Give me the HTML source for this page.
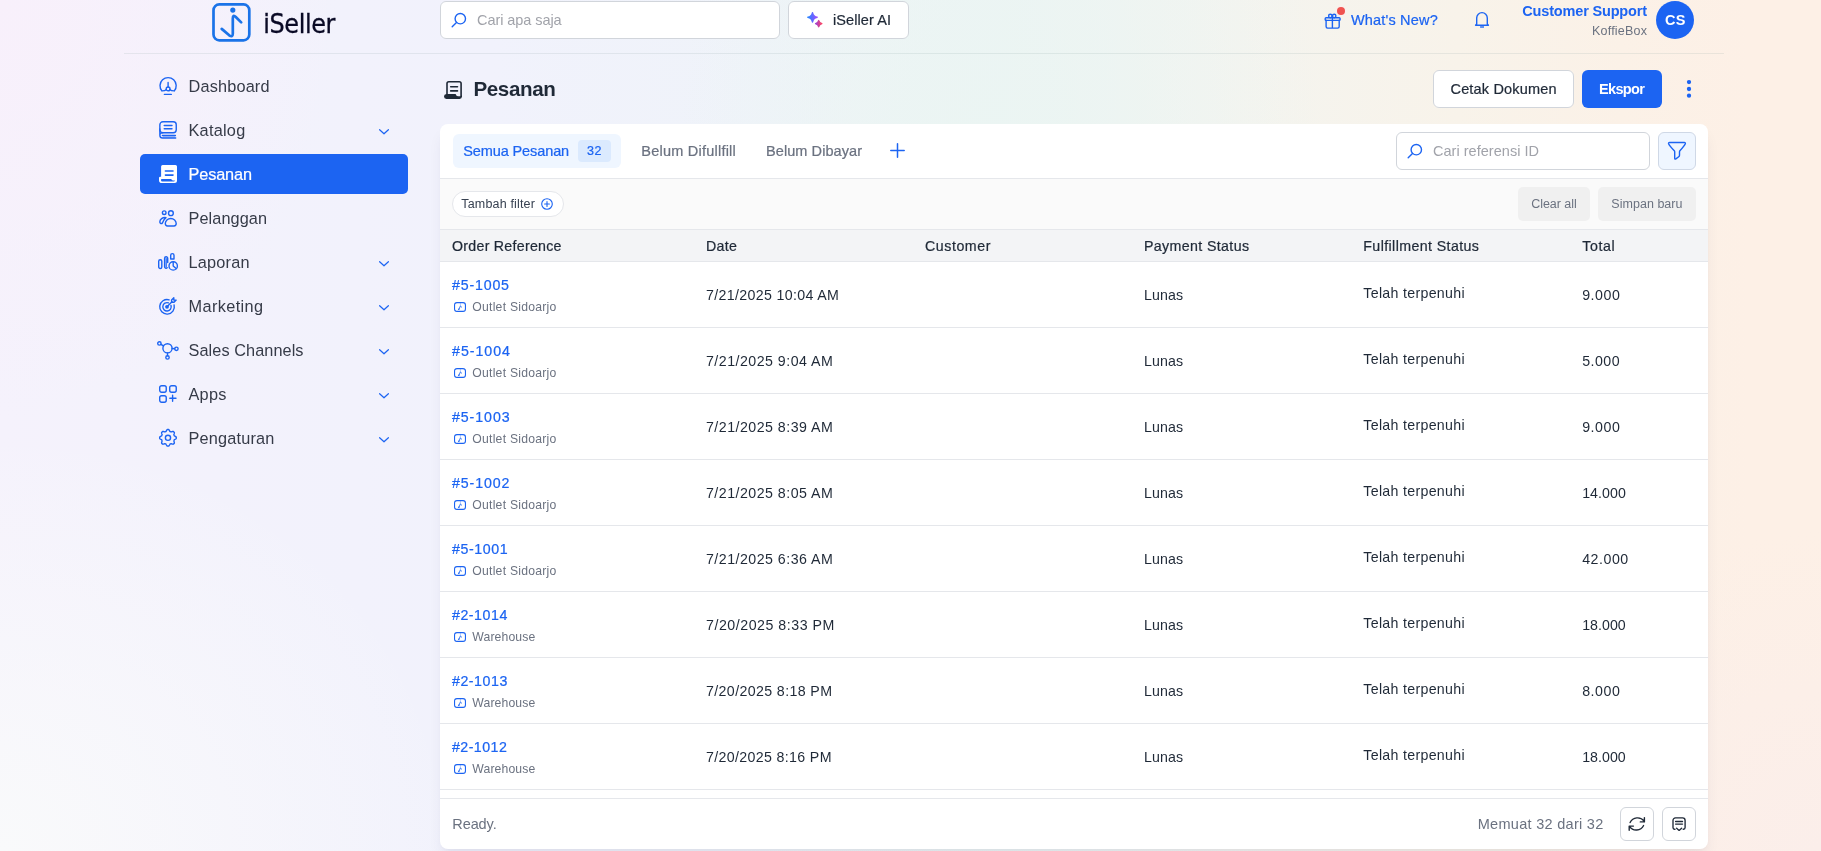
<!DOCTYPE html><html lang="id"><head><meta charset="utf-8"><title>Pesanan - iSeller</title><style>
*{box-sizing:border-box;margin:0;padding:0}
html,body{width:1821px;height:851px;overflow:hidden}
body{font-family:"Liberation Sans",sans-serif;position:relative;background:#f3f1fc;
 background-image:
  radial-gradient(ellipse 340px 420px at 0px 0px,#f8f0fb 0%,rgba(248,240,251,0) 100%),
  radial-gradient(ellipse 460px 420px at 0px 100%,#f9fafb 0%,rgba(249,250,251,0) 100%),
  radial-gradient(ellipse 320px 320px at 100% 100%,#fbeeea 0%,rgba(251,238,234,0) 100%),
  radial-gradient(ellipse 330px 900px at 1000px 40%,#eaf5f2 0%,rgba(234,245,242,0) 100%),
  linear-gradient(90deg,#f5f2fc 0%,#f3f2fc 12%,#f1f2fc 27%,#eff3f9 42%,#eef4f5 55%,#f4f4ef 68%,#f8f3ea 80%,#fbf1e7 89%,#fdf0e6 96%,#fdf0e6 100%);
}
.t{position:absolute;white-space:pre;line-height:20px;display:block}
.abs{position:absolute}
svg{position:absolute;overflow:visible}
.box{position:absolute;background:#fff;border:1px solid #d1d5db;border-radius:6px}
header,nav,main{position:absolute;left:0;top:0;will-change:transform}
.hr{position:absolute;height:1px;background:#e5e7eb}
</style></head><body>
<header>
<div class="abs" style="left:124px;top:53px;width:1600px;height:1px;background:rgba(120,150,150,.14)"></div>
<svg style="left:211px;top:2px" width="40" height="40" viewBox="0 0 40 40" fill="none" stroke="#1a73e8" stroke-width="2.7" stroke-linecap="round" stroke-linejoin="round"><rect x="2.5" y="2.4" width="35.8" height="35.9" rx="5.8"/><path stroke-width="2.7" d="M10.7 26.9 L18.2 33.3 Q21.8 35.8 21.8 31.5 V16.5 Q21.8 12 24.8 15 L30.2 20.4"/><circle cx="21.8" cy="8.1" r="2.6" fill="#1a73e8" stroke="none"/></svg>
<span class="t" style="left:263.3px;top:13.70px;font-family:'DejaVu Sans','Liberation Sans',sans-serif;font-stretch:condensed;font-size:26.6px;letter-spacing:-0.4px;color:#0a0a25;-webkit-text-stroke:0.3px #0a0a25">iSeller</span>
<div class="box" style="left:440px;top:1px;width:340px;height:38px"></div>
<svg style="left:451px;top:12px" width="16" height="16" viewBox="0 0 16 16" fill="none" stroke="#1c64f2" stroke-width="1.4" stroke-linecap="round"><circle cx="9.3" cy="6.7" r="5.2"/><path d="M5.5 10.5 L1.2 14.8"/></svg>
<span class="t " style="top:9.98px;font-size:14.5px;color:#a1a3aa;left:477.00px;letter-spacing:-0.070px;">Cari apa saja</span>
<div class="box" style="left:788px;top:1px;width:121px;height:38px"></div>
<svg style="left:806px;top:11px" width="18" height="18" viewBox="0 0 18 18"><defs><linearGradient id="ga" x1="0" y1="0" x2="1" y2="0"><stop offset="0" stop-color="#2684ff"/><stop offset="1" stop-color="#9a4dff"/></linearGradient><linearGradient id="gb" x1="0" y1="0" x2="1" y2="0"><stop offset="0" stop-color="#9a3fd6"/><stop offset="1" stop-color="#ff4560"/></linearGradient></defs><path fill="url(#ga)" stroke="url(#ga)" stroke-width="1.5" stroke-linejoin="round" d="M6.5 1.8 Q7.3 5.5 11.1 6.35 Q7.3 7.2 6.5 10.9 Q5.7 7.2 1.9 6.35 Q5.7 5.5 6.5 1.8Z"/><path fill="url(#gb)" stroke="url(#gb)" stroke-width="1.25" stroke-linejoin="round" d="M12.7 9.5 Q13.3 12.1 15.9 12.7 Q13.3 13.3 12.7 15.9 Q12.1 13.3 9.5 12.7 Q12.1 12.1 12.7 9.5Z"/></svg>
<span class="t " style="top:9.98px;font-size:14.5px;color:#1f2937;left:833.00px;-webkit-text-stroke:0.22px currentColor;letter-spacing:0.085px;">iSeller AI</span>
<svg style="left:1324px;top:12px" width="18" height="18" viewBox="0 0 18 18" fill="none" stroke="#1c64f2" stroke-width="1.4" stroke-linecap="round" stroke-linejoin="round"><rect x="1.2" y="5.8" width="14.9" height="2.6" rx=".9"/><path d="M2.1 8.3 V14.6 a1.5 1.5 0 0 0 1.5 1.5 H13.7 a1.5 1.5 0 0 0 1.5 -1.5 V8.3 M8.4 5.5 V16"/><circle cx="6.3" cy="4" r="1.7"/><circle cx="10.2" cy="4" r="1.7"/></svg>
<div class="abs" style="left:1337px;top:6.8px;width:8px;height:8px;border-radius:50%;background:#ef5350;box-shadow:0 0 0 1px rgba(255,235,235,.7)"></div>
<span class="t " style="top:9.98px;font-size:14.5px;color:#1c64f2;left:1351.00px;-webkit-text-stroke:0.22px currentColor;letter-spacing:0.173px;">What&#x27;s New?</span>
<svg style="left:1474px;top:11px" width="16" height="18" viewBox="0 0 16 18" fill="none" stroke="#1c64f2" stroke-width="1.4" stroke-linecap="round" stroke-linejoin="round"><path d="M2.7 13 V6.9 a5.3 5.3 0 0 1 10.6 0 V13 L14.4 14.3 H1.6 Z"/><path d="M6.1 16 H10" stroke-width="2" stroke-opacity=".7" stroke-linecap="butt"/></svg>
<span class="t " style="top:1.18px;font-size:14.5px;color:#1c64f2;left:1522.30px;font-weight:700;letter-spacing:-0.172px;">Customer Support</span>
<span class="t " style="top:21.17px;font-size:12.5px;color:#6b7280;left:1592.00px;letter-spacing:0.215px;">KoffieBox</span>
<div class="abs" style="left:1656px;top:1px;width:38px;height:38px;border-radius:50%;background:#1c64f2"></div>
<span class="t " style="top:10.28px;font-size:14.5px;color:#fff;left:1665.00px;font-weight:700;letter-spacing:0.344px;">CS</span>
</header>
<nav>
<div class="abs" style="left:140px;top:154px;width:268px;height:40px;border-radius:5px;background:#1c64f2"></div>
<svg style="left:159px;top:77px" width="18" height="18" viewBox="0 0 18 18" fill="none" stroke="#1c64f2" stroke-width="1.4" stroke-linecap="round" stroke-linejoin="round"><path d="M2.9 13.9 A8.1 8.1 0 1 1 15.3 13.9 M2.9 13.9 C5 13.9 6.6 13.4 7.4 12.5 M15.3 13.9 C13.2 13.9 11.6 13.4 10.8 12.5 M9.1 5.4 V10"/><circle cx="9.1" cy="11.9" r="1.9"/><path d="M5.4 17.4 H12.3"/></svg>
<span class="t " style="top:76.25px;font-size:16.3px;color:#363b48;left:188.50px;letter-spacing:0.168px;">Dashboard</span>
<svg style="left:159px;top:121px" width="18" height="18" viewBox="0 0 18 18" fill="none" stroke="#1c64f2" stroke-width="1.4" stroke-linecap="round" stroke-linejoin="round"><rect x="4" y="14.5" width="12.4" height="2.5" fill="rgba(28,100,242,.3)" stroke="none"/><rect x=".85" y=".75" width="16.4" height="11" rx="3"/><path d="M0.85 8 V14.2 a2.8 2.8 0 0 0 2.8 2.8 H16.7 M3.4 14.5 H16.4 M5.2 4.5 H13 M5.2 7.7 H13 M0.9 13.6 Q1.2 11.8 3.8 11.75"/></svg>
<span class="t " style="top:120.25px;font-size:16.3px;color:#363b48;left:188.50px;letter-spacing:0.244px;">Katalog</span>
<svg style="left:379px;top:128.7px" width="10" height="6" viewBox="0 0 10 6" fill="none" stroke="#1c64f2" stroke-width="1.2" stroke-linecap="round" stroke-linejoin="round"><path d="M0.6 0.7 L5 4.8 L9.4 0.7"/></svg>
<svg style="left:159px;top:165px" width="18" height="18" viewBox="0 0 18 18" fill="#fff"><path d="M3.6 0 H16.5 a1.5 1.5 0 0 1 1.5 1.5 V15.5 a2.5 2.5 0 0 1 -2.5 2.5 H2.8 a2.8 2.8 0 0 1 -2.8 -2.8 V13 a1.2 1.2 0 0 1 1.2 -1.2 H2.1 V1.5 a1.5 1.5 0 0 1 1.5 -1.5 Z"/><path d="M6.4 6 H14 M6.4 10.1 H14" stroke="#1c64f2" stroke-width="1.6" stroke-linecap="round"/><path fill="#1c64f2" d="M2.6 14 H12.2 Q12.8 15.4 14 15.4 H16 Q15.7 16.4 14.7 16.4 H3.2 Q2 16.4 2 15.2 Q2 14 2.6 14 Z"/></svg>
<span class="t " style="top:164.25px;font-size:16.3px;color:#fff;left:188.50px;-webkit-text-stroke:0.22px currentColor;letter-spacing:-0.130px;">Pesanan</span>
<svg style="left:159px;top:209px" width="18" height="18" viewBox="0 0 18 18" fill="none" stroke="#1c64f2" stroke-width="1.4" stroke-linecap="round" stroke-linejoin="round"><circle cx="5.2" cy="3.7" r="1.8"/><circle cx="11.9" cy="4.2" r="2.4"/><path d="M6.3 14.6 A5.45 5.1 0 0 1 17.2 14.6 Q17.2 17 15 17 H8.5 Q6.3 17 6.3 14.6 Z M7 8.6 C3.6 8 0.8 10.4 0.8 13 C0.8 14.6 2.6 15 3.4 14 C4 12 5 10 7 8.6 Z"/></svg>
<span class="t " style="top:208.25px;font-size:16.3px;color:#363b48;left:188.50px;letter-spacing:0.078px;">Pelanggan</span>
<svg style="left:159px;top:253px" width="18" height="18" viewBox="0 0 18 18" fill="none" stroke="#1c64f2" stroke-width="1.4" stroke-linecap="round" stroke-linejoin="round"><rect x="-0.3" y="6.7" width="3.1" height="8.8" rx="1.55"/><path d="M8.7 9.6 V5.35 a1.55 1.55 0 0 0 -3.1 0 V13.65 a1.55 1.55 0 0 0 2.6 1.1"/><path d="M7.2 5.5 V14" stroke-width="1.2"/><path d="M11.7 6 V2.25 a1.65 1.65 0 0 1 3.3 0 V6 Z"/><circle cx="14.2" cy="12.9" r="4.2"/><path d="M14.2 8.9 V12.9 L17.1 15.6"/></svg>
<span class="t " style="top:252.25px;font-size:16.3px;color:#363b48;left:188.50px;letter-spacing:0.206px;">Laporan</span>
<svg style="left:379px;top:260.7px" width="10" height="6" viewBox="0 0 10 6" fill="none" stroke="#1c64f2" stroke-width="1.2" stroke-linecap="round" stroke-linejoin="round"><path d="M0.6 0.7 L5 4.8 L9.4 0.7"/></svg>
<svg style="left:159px;top:297px" width="18" height="18" viewBox="0 0 18 18" fill="none" stroke="#1c64f2" stroke-width="1.4" stroke-linecap="round" stroke-linejoin="round"><path d="M10.1 2.8 A7.3 7.3 0 1 0 15.1 8"/><path d="M9.5 5.9 A4.2 4.2 0 1 0 12 8.5"/><circle cx="8" cy="9.8" r="1.9" fill="#1c64f2" stroke="none"/><path d="M8 9.8 L13 4.8"/><path d="M12.6 5.3 V3 L14.8 0.8 V3.1 H17.2 L15 5.3 Z"/></svg>
<span class="t " style="top:296.25px;font-size:16.3px;color:#363b48;left:188.50px;letter-spacing:0.387px;">Marketing</span>
<svg style="left:379px;top:304.7px" width="10" height="6" viewBox="0 0 10 6" fill="none" stroke="#1c64f2" stroke-width="1.2" stroke-linecap="round" stroke-linejoin="round"><path d="M0.6 0.7 L5 4.8 L9.4 0.7"/></svg>
<svg style="left:159px;top:341px" width="18" height="18" viewBox="0 0 18 18" fill="none" stroke="#1c64f2" stroke-width="1.4" stroke-linecap="round" stroke-linejoin="round"><circle cx="8.5" cy="7.3" r="4.6"/><circle cx="0.4" cy="2.4" r="1.7"/><circle cx="17.4" cy="7.8" r="1.7"/><circle cx="8.5" cy="16.4" r="1.7"/><path d="M1.9 3.3 L4.5 4.9 M13.1 7.5 L15.7 7.7 M8.5 11.9 V14.7"/></svg>
<span class="t " style="top:340.25px;font-size:16.3px;color:#363b48;left:188.50px;letter-spacing:0.073px;">Sales Channels</span>
<svg style="left:379px;top:348.7px" width="10" height="6" viewBox="0 0 10 6" fill="none" stroke="#1c64f2" stroke-width="1.2" stroke-linecap="round" stroke-linejoin="round"><path d="M0.6 0.7 L5 4.8 L9.4 0.7"/></svg>
<svg style="left:159px;top:385px" width="18" height="18" viewBox="0 0 18 18" fill="none" stroke="#1c64f2" stroke-width="1.4" stroke-linecap="round" stroke-linejoin="round"><rect x=".7" y=".7" width="6.55" height="6.55" rx="1.9"/><rect x="10.7" y=".7" width="6.55" height="6.55" rx="1.9"/><rect x=".7" y="10.7" width="6.55" height="6.55" rx="1.9"/><path d="M13.6 10.2 V16.2 M10.8 13.2 H17"/></svg>
<span class="t " style="top:384.25px;font-size:16.3px;color:#363b48;left:188.50px;letter-spacing:0.258px;">Apps</span>
<svg style="left:379px;top:392.7px" width="10" height="6" viewBox="0 0 10 6" fill="none" stroke="#1c64f2" stroke-width="1.2" stroke-linecap="round" stroke-linejoin="round"><path d="M0.6 0.7 L5 4.8 L9.4 0.7"/></svg>
<svg style="left:159px;top:429px" width="18" height="18" viewBox="0 0 18 18" fill="none" stroke="#1c64f2" stroke-width="1.4" stroke-linecap="round" stroke-linejoin="round"><circle cx="8.98" cy="8.8" r="2.6"/><path d="M17.28 8.80 L17.27 9.13 L17.25 9.45 L17.05 9.75 L16.69 10.02 L16.29 10.25 L15.88 10.46 L15.50 10.64 L15.26 10.84 L15.17 11.08 L15.08 11.33 L14.97 11.56 L14.86 11.80 L14.89 12.11 L15.03 12.51 L15.17 12.94 L15.29 13.39 L15.36 13.83 L15.29 14.19 L15.07 14.43 L14.85 14.67 L14.61 14.89 L14.37 15.11 L14.01 15.18 L13.57 15.11 L13.12 14.99 L12.69 14.85 L12.29 14.71 L11.98 14.68 L11.74 14.79 L11.51 14.90 L11.26 14.99 L11.02 15.08 L10.82 15.32 L10.64 15.70 L10.43 16.11 L10.20 16.51 L9.93 16.87 L9.63 17.07 L9.31 17.09 L8.98 17.10 L8.65 17.09 L8.33 17.07 L8.03 16.87 L7.76 16.51 L7.53 16.11 L7.32 15.70 L7.14 15.32 L6.94 15.08 L6.70 14.99 L6.45 14.90 L6.22 14.79 L5.98 14.68 L5.67 14.71 L5.27 14.85 L4.84 14.99 L4.39 15.11 L3.95 15.18 L3.59 15.11 L3.35 14.89 L3.11 14.67 L2.89 14.43 L2.67 14.19 L2.60 13.83 L2.67 13.39 L2.79 12.94 L2.93 12.51 L3.07 12.11 L3.10 11.80 L2.99 11.56 L2.88 11.33 L2.79 11.08 L2.70 10.84 L2.46 10.64 L2.08 10.46 L1.67 10.25 L1.27 10.02 L0.91 9.75 L0.71 9.45 L0.69 9.13 L0.68 8.80 L0.69 8.47 L0.71 8.15 L0.91 7.85 L1.27 7.58 L1.67 7.35 L2.08 7.14 L2.46 6.96 L2.70 6.76 L2.79 6.52 L2.88 6.27 L2.99 6.04 L3.10 5.80 L3.07 5.49 L2.93 5.09 L2.79 4.66 L2.67 4.21 L2.60 3.77 L2.67 3.41 L2.89 3.17 L3.11 2.93 L3.35 2.71 L3.59 2.49 L3.95 2.42 L4.39 2.49 L4.84 2.61 L5.27 2.75 L5.67 2.89 L5.98 2.92 L6.22 2.81 L6.45 2.70 L6.70 2.61 L6.94 2.52 L7.14 2.28 L7.32 1.90 L7.53 1.49 L7.76 1.09 L8.03 0.73 L8.33 0.53 L8.65 0.51 L8.98 0.50 L9.31 0.51 L9.63 0.53 L9.93 0.73 L10.20 1.09 L10.43 1.49 L10.64 1.90 L10.82 2.28 L11.02 2.52 L11.26 2.61 L11.51 2.70 L11.74 2.81 L11.98 2.92 L12.29 2.89 L12.69 2.75 L13.12 2.61 L13.57 2.49 L14.01 2.42 L14.37 2.49 L14.61 2.71 L14.85 2.93 L15.07 3.17 L15.29 3.41 L15.36 3.77 L15.29 4.21 L15.17 4.66 L15.03 5.09 L14.89 5.49 L14.86 5.80 L14.97 6.04 L15.08 6.27 L15.17 6.52 L15.26 6.76 L15.50 6.96 L15.88 7.14 L16.29 7.35 L16.69 7.58 L17.05 7.85 L17.25 8.15 L17.27 8.47 Z"/></svg>
<span class="t " style="top:428.25px;font-size:16.3px;color:#363b48;left:188.50px;letter-spacing:0.177px;">Pengaturan</span>
<svg style="left:379px;top:436.7px" width="10" height="6" viewBox="0 0 10 6" fill="none" stroke="#1c64f2" stroke-width="1.2" stroke-linecap="round" stroke-linejoin="round"><path d="M0.6 0.7 L5 4.8 L9.4 0.7"/></svg>
</nav>
<main>
<svg style="left:444px;top:80.8px" width="18" height="18" viewBox="0 0 18 18" fill="none" stroke="#1f2937" stroke-width="1.6" stroke-linecap="round" stroke-linejoin="round"><path d="M3 13 V2.6 a1.8 1.8 0 0 1 1.8 -1.8 H15.3 a1.8 1.8 0 0 1 1.8 1.8 V15.5 M6.7 5.8 H13.5 M6.7 9.9 H13.5"/><path stroke="none" fill="#1f2937" d="M2.4 13 H11.6 Q12.3 15.2 14 15.2 H16.4 L17.9 14.2 V15.6 a2.3 2.3 0 0 1 -2.3 2.3 H2.5 a2.45 2.45 0 0 1 -0.1 -4.9 Z"/></svg>
<span class="t " style="top:78.96px;font-size:20.6px;color:#1f2937;left:473.40px;font-weight:700;letter-spacing:-0.386px;">Pesanan</span>
<div class="box" style="left:1433px;top:70px;width:141px;height:38px"></div>
<span class="t " style="top:78.98px;font-size:14.5px;color:#1f2937;left:1450.50px;-webkit-text-stroke:0.22px currentColor;letter-spacing:0.169px;">Cetak Dokumen</span>
<div class="abs" style="left:1582px;top:70px;width:80px;height:38px;border-radius:6px;background:#1c64f2"></div>
<span class="t " style="top:78.98px;font-size:14.5px;color:#fff;left:1599.00px;font-weight:700;letter-spacing:-0.674px;">Ekspor</span>
<svg style="left:1684px;top:78px" width="10" height="22" viewBox="0 0 10 22" fill="#1c64f2"><circle cx="5" cy="4.1" r="2.15"/><circle cx="5" cy="11" r="2.15"/><circle cx="5" cy="17.7" r="2.15"/></svg>
<div class="abs" style="left:440px;top:124px;width:1268px;height:725px;border-radius:8px;background:#fff;box-shadow:0 10px 15px -3px rgba(40,40,90,.08),0 4px 6px -2px rgba(40,40,90,.04)"></div>
<div class="abs" style="left:453px;top:134px;width:168px;height:34px;border-radius:6px;background:#eff6ff"></div>
<span class="t " style="top:140.98px;font-size:14.5px;color:#1c64f2;left:463.20px;-webkit-text-stroke:0.22px currentColor;letter-spacing:-0.102px;">Semua Pesanan</span>
<div class="abs" style="left:578px;top:140px;width:33px;height:22px;border-radius:4px;background:#dbeafe"></div>
<span class="t " style="top:141.17px;font-size:12.5px;color:#1c64f2;left:587.00px;-webkit-text-stroke:0.22px currentColor;letter-spacing:0.594px;">32</span>
<span class="t " style="top:140.98px;font-size:14.5px;color:#6b7280;left:641.30px;-webkit-text-stroke:0.22px currentColor;letter-spacing:0.229px;">Belum Difullfill</span>
<span class="t " style="top:140.98px;font-size:14.5px;color:#6b7280;left:766.00px;-webkit-text-stroke:0.22px currentColor;letter-spacing:0.076px;">Belum Dibayar</span>
<svg style="left:890.3px;top:142.7px" width="15" height="15" viewBox="0 0 15 15" fill="none" stroke="#1c64f2" stroke-width="1.5" stroke-linecap="round"><path d="M7.5 0.8 V14.2 M0.8 7.5 H14.2"/></svg>
<div class="box" style="left:1396px;top:132px;width:254px;height:38px"></div>
<svg style="left:1407px;top:143px" width="16" height="16" viewBox="0 0 16 16" fill="none" stroke="#1c64f2" stroke-width="1.4" stroke-linecap="round"><circle cx="9.3" cy="6.7" r="5.2"/><path d="M5.5 10.5 L1.2 14.8"/></svg>
<span class="t " style="top:140.98px;font-size:14.5px;color:#a1a3aa;left:1433.00px;letter-spacing:0.027px;">Cari referensi ID</span>
<div class="box" style="left:1658px;top:132px;width:38px;height:38px;background:#eff6ff;border-color:#cfd8e6"></div>
<svg style="left:1667px;top:141px" width="20" height="20" viewBox="0 0 20 20" fill="none" stroke="#1c64f2" stroke-width="1.4" stroke-linejoin="round" stroke-linecap="round"><path d="M2.6 1.5 H17.3 Q18.7 1.5 18.3 2.8 Q17.6 4.6 12.9 9.8 Q12.5 10.3 12.5 11 V14.2 Q12.5 15.2 11.7 15.8 L8.9 17.9 Q7.7 18.6 7.7 17.3 V11 Q7.7 10.3 7.3 9.8 Q2.3 4.6 1.6 2.8 Q1.2 1.5 2.6 1.5 Z"/></svg>
<div class="hr" style="left:440px;top:178px;width:1268px"></div>
<div class="abs" style="left:440px;top:179px;width:1268px;height:50px;background:#fafafa"></div>
<div class="abs" style="left:452px;top:191px;width:112px;height:26px;border-radius:13px;background:#fff;border:1px solid #e5e7eb"></div>
<span class="t " style="top:193.97px;font-size:12.5px;color:#374151;left:461.30px;letter-spacing:0.170px;">Tambah filter</span>
<svg style="left:541px;top:198px" width="12" height="12" viewBox="0 0 12 12" fill="none" stroke="#1c64f2" stroke-width="1.1" stroke-linecap="round"><circle cx="6" cy="6" r="5.3"/><path d="M6 3.6 V8.4 M3.6 6 H8.4"/></svg>
<div class="abs" style="left:1518px;top:187px;width:72px;height:34px;border-radius:5px;background:#f0f0f0"></div>
<span class="t " style="top:193.97px;font-size:12.5px;color:#6b7280;left:1531.20px;letter-spacing:-0.045px;">Clear all</span>
<div class="abs" style="left:1598px;top:187px;width:98px;height:34px;border-radius:5px;background:#f0f0f0"></div>
<span class="t " style="top:193.97px;font-size:12.5px;color:#6b7280;left:1611.30px;letter-spacing:0.033px;">Simpan baru</span>
<div class="hr" style="left:440px;top:229px;width:1268px"></div>
<div class="abs" style="left:440px;top:230px;width:1268px;height:31px;background:#f3f4f6"></div>
<div class="hr" style="left:440px;top:261px;width:1268px"></div>
<span class="t " style="top:236.08px;font-size:14.2px;color:#1f2937;left:452.00px;-webkit-text-stroke:0.22px currentColor;letter-spacing:0.273px;">Order Reference</span>
<span class="t " style="top:236.08px;font-size:14.2px;color:#1f2937;left:706.00px;-webkit-text-stroke:0.22px currentColor;letter-spacing:0.344px;">Date</span>
<span class="t " style="top:236.08px;font-size:14.2px;color:#1f2937;left:925.00px;-webkit-text-stroke:0.22px currentColor;letter-spacing:0.557px;">Customer</span>
<span class="t " style="top:236.08px;font-size:14.2px;color:#1f2937;left:1144.00px;-webkit-text-stroke:0.22px currentColor;letter-spacing:0.373px;">Payment Status</span>
<span class="t " style="top:236.08px;font-size:14.2px;color:#1f2937;left:1363.30px;-webkit-text-stroke:0.22px currentColor;letter-spacing:0.399px;">Fulfillment Status</span>
<span class="t " style="top:236.08px;font-size:14.2px;color:#1f2937;left:1582.20px;-webkit-text-stroke:0.22px currentColor;letter-spacing:0.608px;">Total</span>
<span class="t ref" style="top:274.88px;font-size:14.2px;color:#1c64f2;left:452.00px;-webkit-text-stroke:0.22px currentColor;letter-spacing:0.820px;">#5-1005</span>
<svg style="left:454px;top:302px" width="12" height="10" viewBox="0 0 12 10" fill="none" stroke="#1c64f2" stroke-width="1.1" stroke-linecap="round" stroke-linejoin="round"><rect x=".55" y=".65" width="10.9" height="8.7" rx="2.4"/><circle cx="4.8" cy="7.2" r=".8" fill="#1c64f2" stroke="none"/><path stroke-width=".9" d="M5.1 7 L6.4 4 L7.6 5.1"/><path stroke-width=".7" stroke-opacity=".45" d="M6.4 1.2 V3.6"/></svg>
<span class="t out" style="top:296.77px;font-size:12.2px;color:#6b7280;left:472.30px;letter-spacing:0.241px;">Outlet Sidoarjo</span>
<span class="t date" style="top:285.08px;font-size:14.2px;color:#1f2937;left:706.00px;letter-spacing:0.340px;">7/21/2025 10:04 AM</span>
<span class="t " style="top:285.08px;font-size:14.2px;color:#1f2937;left:1144.00px;letter-spacing:0.086px;">Lunas</span>
<span class="t " style="top:283.08px;font-size:14.2px;color:#1f2937;left:1363.30px;letter-spacing:0.305px;">Telah terpenuhi</span>
<span class="t tot" style="top:285.08px;font-size:14.2px;color:#1f2937;left:1582.20px;letter-spacing:0.521px;">9.000</span>
<div class="hr" style="left:440px;top:327px;width:1268px"></div>
<span class="t ref" style="top:340.88px;font-size:14.2px;color:#1c64f2;left:452.00px;-webkit-text-stroke:0.22px currentColor;letter-spacing:0.987px;">#5-1004</span>
<svg style="left:454px;top:368px" width="12" height="10" viewBox="0 0 12 10" fill="none" stroke="#1c64f2" stroke-width="1.1" stroke-linecap="round" stroke-linejoin="round"><rect x=".55" y=".65" width="10.9" height="8.7" rx="2.4"/><circle cx="4.8" cy="7.2" r=".8" fill="#1c64f2" stroke="none"/><path stroke-width=".9" d="M5.1 7 L6.4 4 L7.6 5.1"/><path stroke-width=".7" stroke-opacity=".45" d="M6.4 1.2 V3.6"/></svg>
<span class="t out" style="top:362.77px;font-size:12.2px;color:#6b7280;left:472.30px;letter-spacing:0.241px;">Outlet Sidoarjo</span>
<span class="t date" style="top:351.08px;font-size:14.2px;color:#1f2937;left:706.00px;letter-spacing:0.480px;">7/21/2025 9:04 AM</span>
<span class="t " style="top:351.08px;font-size:14.2px;color:#1f2937;left:1144.00px;letter-spacing:0.086px;">Lunas</span>
<span class="t " style="top:349.08px;font-size:14.2px;color:#1f2937;left:1363.30px;letter-spacing:0.305px;">Telah terpenuhi</span>
<span class="t tot" style="top:351.08px;font-size:14.2px;color:#1f2937;left:1582.20px;letter-spacing:0.471px;">5.000</span>
<div class="hr" style="left:440px;top:393px;width:1268px"></div>
<span class="t ref" style="top:406.88px;font-size:14.2px;color:#1c64f2;left:452.00px;-webkit-text-stroke:0.22px currentColor;letter-spacing:0.920px;">#5-1003</span>
<svg style="left:454px;top:434px" width="12" height="10" viewBox="0 0 12 10" fill="none" stroke="#1c64f2" stroke-width="1.1" stroke-linecap="round" stroke-linejoin="round"><rect x=".55" y=".65" width="10.9" height="8.7" rx="2.4"/><circle cx="4.8" cy="7.2" r=".8" fill="#1c64f2" stroke="none"/><path stroke-width=".9" d="M5.1 7 L6.4 4 L7.6 5.1"/><path stroke-width=".7" stroke-opacity=".45" d="M6.4 1.2 V3.6"/></svg>
<span class="t out" style="top:428.77px;font-size:12.2px;color:#6b7280;left:472.30px;letter-spacing:0.241px;">Outlet Sidoarjo</span>
<span class="t date" style="top:417.08px;font-size:14.2px;color:#1f2937;left:706.00px;letter-spacing:0.480px;">7/21/2025 8:39 AM</span>
<span class="t " style="top:417.08px;font-size:14.2px;color:#1f2937;left:1144.00px;letter-spacing:0.086px;">Lunas</span>
<span class="t " style="top:415.08px;font-size:14.2px;color:#1f2937;left:1363.30px;letter-spacing:0.305px;">Telah terpenuhi</span>
<span class="t tot" style="top:417.08px;font-size:14.2px;color:#1f2937;left:1582.20px;letter-spacing:0.521px;">9.000</span>
<div class="hr" style="left:440px;top:459px;width:1268px"></div>
<span class="t ref" style="top:472.88px;font-size:14.2px;color:#1c64f2;left:452.00px;-webkit-text-stroke:0.22px currentColor;letter-spacing:0.904px;">#5-1002</span>
<svg style="left:454px;top:500px" width="12" height="10" viewBox="0 0 12 10" fill="none" stroke="#1c64f2" stroke-width="1.1" stroke-linecap="round" stroke-linejoin="round"><rect x=".55" y=".65" width="10.9" height="8.7" rx="2.4"/><circle cx="4.8" cy="7.2" r=".8" fill="#1c64f2" stroke="none"/><path stroke-width=".9" d="M5.1 7 L6.4 4 L7.6 5.1"/><path stroke-width=".7" stroke-opacity=".45" d="M6.4 1.2 V3.6"/></svg>
<span class="t out" style="top:494.77px;font-size:12.2px;color:#6b7280;left:472.30px;letter-spacing:0.241px;">Outlet Sidoarjo</span>
<span class="t date" style="top:483.08px;font-size:14.2px;color:#1f2937;left:706.00px;letter-spacing:0.480px;">7/21/2025 8:05 AM</span>
<span class="t " style="top:483.08px;font-size:14.2px;color:#1f2937;left:1144.00px;letter-spacing:0.086px;">Lunas</span>
<span class="t " style="top:481.08px;font-size:14.2px;color:#1f2937;left:1363.30px;letter-spacing:0.305px;">Telah terpenuhi</span>
<span class="t tot" style="top:483.08px;font-size:14.2px;color:#1f2937;left:1582.20px;letter-spacing:0.039px;">14.000</span>
<div class="hr" style="left:440px;top:525px;width:1268px"></div>
<span class="t ref" style="top:538.88px;font-size:14.2px;color:#1c64f2;left:452.00px;-webkit-text-stroke:0.22px currentColor;letter-spacing:0.587px;">#5-1001</span>
<svg style="left:454px;top:566px" width="12" height="10" viewBox="0 0 12 10" fill="none" stroke="#1c64f2" stroke-width="1.1" stroke-linecap="round" stroke-linejoin="round"><rect x=".55" y=".65" width="10.9" height="8.7" rx="2.4"/><circle cx="4.8" cy="7.2" r=".8" fill="#1c64f2" stroke="none"/><path stroke-width=".9" d="M5.1 7 L6.4 4 L7.6 5.1"/><path stroke-width=".7" stroke-opacity=".45" d="M6.4 1.2 V3.6"/></svg>
<span class="t out" style="top:560.77px;font-size:12.2px;color:#6b7280;left:472.30px;letter-spacing:0.241px;">Outlet Sidoarjo</span>
<span class="t date" style="top:549.08px;font-size:14.2px;color:#1f2937;left:706.00px;letter-spacing:0.480px;">7/21/2025 6:36 AM</span>
<span class="t " style="top:549.08px;font-size:14.2px;color:#1f2937;left:1144.00px;letter-spacing:0.086px;">Lunas</span>
<span class="t " style="top:547.08px;font-size:14.2px;color:#1f2937;left:1363.30px;letter-spacing:0.305px;">Telah terpenuhi</span>
<span class="t tot" style="top:549.08px;font-size:14.2px;color:#1f2937;left:1582.20px;letter-spacing:0.519px;">42.000</span>
<div class="hr" style="left:440px;top:591px;width:1268px"></div>
<span class="t ref" style="top:604.88px;font-size:14.2px;color:#1c64f2;left:452.00px;-webkit-text-stroke:0.22px currentColor;letter-spacing:0.537px;">#2-1014</span>
<svg style="left:454px;top:632px" width="12" height="10" viewBox="0 0 12 10" fill="none" stroke="#1c64f2" stroke-width="1.1" stroke-linecap="round" stroke-linejoin="round"><rect x=".55" y=".65" width="10.9" height="8.7" rx="2.4"/><circle cx="4.8" cy="7.2" r=".8" fill="#1c64f2" stroke="none"/><path stroke-width=".9" d="M5.1 7 L6.4 4 L7.6 5.1"/><path stroke-width=".7" stroke-opacity=".45" d="M6.4 1.2 V3.6"/></svg>
<span class="t out" style="top:626.77px;font-size:12.2px;color:#6b7280;left:472.30px;letter-spacing:0.141px;">Warehouse</span>
<span class="t date" style="top:615.08px;font-size:14.2px;color:#1f2937;left:706.00px;letter-spacing:0.531px;">7/20/2025 8:33 PM</span>
<span class="t " style="top:615.08px;font-size:14.2px;color:#1f2937;left:1144.00px;letter-spacing:0.086px;">Lunas</span>
<span class="t " style="top:613.08px;font-size:14.2px;color:#1f2937;left:1363.30px;letter-spacing:0.305px;">Telah terpenuhi</span>
<span class="t tot" style="top:615.08px;font-size:14.2px;color:#1f2937;left:1582.20px;letter-spacing:0.019px;">18.000</span>
<div class="hr" style="left:440px;top:657px;width:1268px"></div>
<span class="t ref" style="top:670.88px;font-size:14.2px;color:#1c64f2;left:452.00px;-webkit-text-stroke:0.22px currentColor;letter-spacing:0.537px;">#2-1013</span>
<svg style="left:454px;top:698px" width="12" height="10" viewBox="0 0 12 10" fill="none" stroke="#1c64f2" stroke-width="1.1" stroke-linecap="round" stroke-linejoin="round"><rect x=".55" y=".65" width="10.9" height="8.7" rx="2.4"/><circle cx="4.8" cy="7.2" r=".8" fill="#1c64f2" stroke="none"/><path stroke-width=".9" d="M5.1 7 L6.4 4 L7.6 5.1"/><path stroke-width=".7" stroke-opacity=".45" d="M6.4 1.2 V3.6"/></svg>
<span class="t out" style="top:692.77px;font-size:12.2px;color:#6b7280;left:472.30px;letter-spacing:0.141px;">Warehouse</span>
<span class="t date" style="top:681.08px;font-size:14.2px;color:#1f2937;left:706.00px;letter-spacing:0.381px;">7/20/2025 8:18 PM</span>
<span class="t " style="top:681.08px;font-size:14.2px;color:#1f2937;left:1144.00px;letter-spacing:0.086px;">Lunas</span>
<span class="t " style="top:679.08px;font-size:14.2px;color:#1f2937;left:1363.30px;letter-spacing:0.305px;">Telah terpenuhi</span>
<span class="t tot" style="top:681.08px;font-size:14.2px;color:#1f2937;left:1582.20px;letter-spacing:0.521px;">8.000</span>
<div class="hr" style="left:440px;top:723px;width:1268px"></div>
<span class="t ref" style="top:736.88px;font-size:14.2px;color:#1c64f2;left:452.00px;-webkit-text-stroke:0.22px currentColor;letter-spacing:0.454px;">#2-1012</span>
<svg style="left:454px;top:764px" width="12" height="10" viewBox="0 0 12 10" fill="none" stroke="#1c64f2" stroke-width="1.1" stroke-linecap="round" stroke-linejoin="round"><rect x=".55" y=".65" width="10.9" height="8.7" rx="2.4"/><circle cx="4.8" cy="7.2" r=".8" fill="#1c64f2" stroke="none"/><path stroke-width=".9" d="M5.1 7 L6.4 4 L7.6 5.1"/><path stroke-width=".7" stroke-opacity=".45" d="M6.4 1.2 V3.6"/></svg>
<span class="t out" style="top:758.77px;font-size:12.2px;color:#6b7280;left:472.30px;letter-spacing:0.141px;">Warehouse</span>
<span class="t date" style="top:747.08px;font-size:14.2px;color:#1f2937;left:706.00px;letter-spacing:0.350px;">7/20/2025 8:16 PM</span>
<span class="t " style="top:747.08px;font-size:14.2px;color:#1f2937;left:1144.00px;letter-spacing:0.086px;">Lunas</span>
<span class="t " style="top:745.08px;font-size:14.2px;color:#1f2937;left:1363.30px;letter-spacing:0.305px;">Telah terpenuhi</span>
<span class="t tot" style="top:747.08px;font-size:14.2px;color:#1f2937;left:1582.20px;letter-spacing:0.019px;">18.000</span>
<div class="hr" style="left:440px;top:789px;width:1268px"></div>
<div class="hr" style="left:440px;top:798px;width:1268px"></div>
<span class="t " style="top:814.28px;font-size:14.5px;color:#6b7280;left:452.30px;letter-spacing:-0.095px;">Ready.</span>
<span class="t " style="top:814.28px;font-size:14.5px;color:#6b7280;left:1477.70px;letter-spacing:0.293px;">Memuat 32 dari 32</span>
<div class="box" style="left:1620px;top:807px;width:34px;height:34px"></div>
<svg style="left:1628px;top:815px" width="18" height="18" viewBox="0 0 18 18" fill="none" stroke="#1f2937" stroke-width="1.4" stroke-linecap="round" stroke-linejoin="round"><path d="M2.1 7.5 A8.3 8.3 0 0 1 16.2 6.2 M16.4 2.6 V6.9 H12.3 M15.6 10.5 A8.3 8.3 0 0 1 1.5 11.6 M1.2 15.3 V11.1 H5.4"/></svg>
<div class="box" style="left:1662px;top:807px;width:34px;height:34px"></div>
<svg style="left:1671px;top:816px" width="16" height="16" viewBox="0 0 16 16" fill="none" stroke="#1f2937" stroke-width="1.35" stroke-linecap="round" stroke-linejoin="round"><path d="M4 13.2 H3.6 a1.6 1.6 0 0 1 -1.6 -1.6 V4.4 a2.5 2.5 0 0 1 2.5 -2.5 H11.6 a2.5 2.5 0 0 1 2.5 2.5 V11.6 a1.6 1.6 0 0 1 -1.6 1.6 H12.2 M4.6 5.5 H11.5 M4.6 8.1 H11.5 M5.6 12.3 L8.1 14.4 L10.6 12.3"/></svg>
</main>
</body></html>
